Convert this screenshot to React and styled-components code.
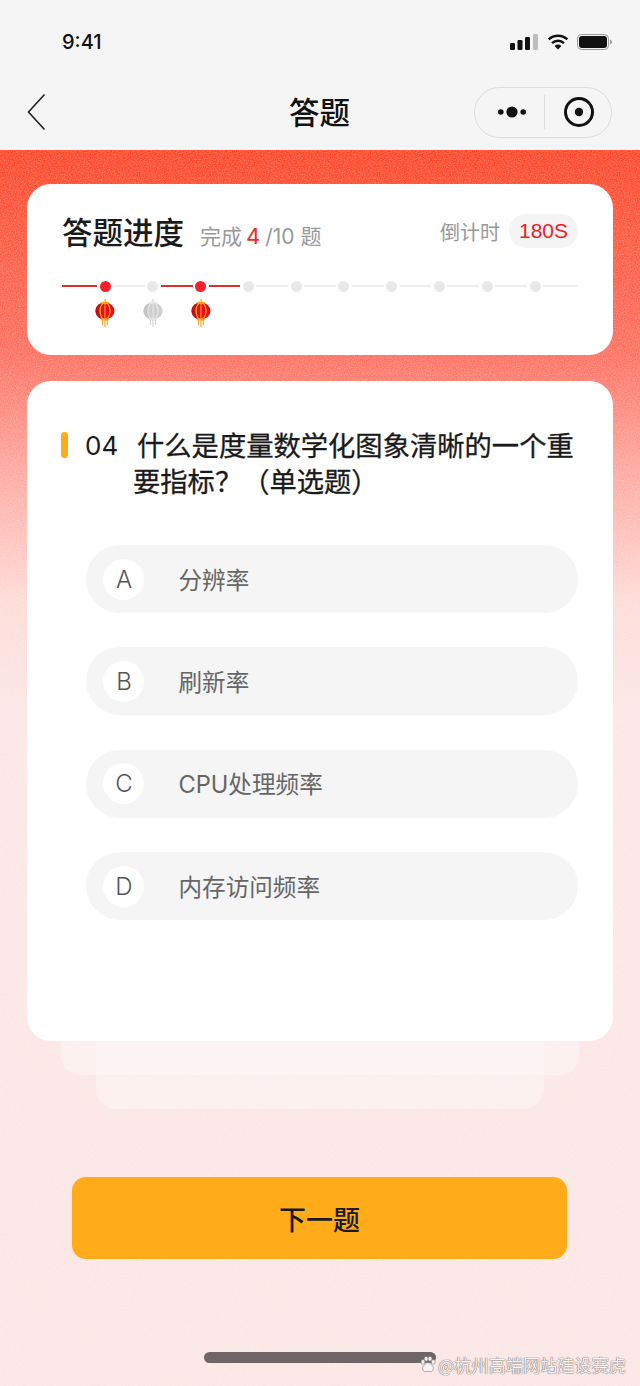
import React from 'react'
import styled, { createGlobalStyle } from 'styled-components'

const CJK = `"Noto Sans CJK SC", "Noto Sans", sans-serif`
const LATIN = `Inter, "Noto Sans CJK SC", sans-serif`

const noise = `url("data:image/svg+xml,%3Csvg xmlns='http://www.w3.org/2000/svg' width='240' height='240'%3E%3Cfilter id='n'%3E%3CfeTurbulence type='fractalNoise' baseFrequency='0.85' numOctaves='2' stitchTiles='stitch'/%3E%3CfeColorMatrix type='matrix' values='0 0 0 0 1 0 0 0 0 1 0 0 0 0 1 0.5 0 0 0 -0.16'/%3E%3C/filter%3E%3Crect width='240' height='240' filter='url(%23n)'/%3E%3C/svg%3E")`

const GlobalStyle = createGlobalStyle`
    * { box-sizing: border-box; }
    html, body { margin: 0; padding: 0; background: #fbe6e5; }
    body { font-family: ${CJK}; }
`

const Page = styled.div`
    position: relative;
    width: 640px;
    height: 1386px;
    overflow: hidden;
    display: flex;
    flex-direction: column;
`

const Header = styled.header`
    height: 150px;
    flex: none;
    background: #f5f5f5;
`

const StatusBar = styled.div`
    height: 84px;
    display: flex;
    align-items: center;
    justify-content: space-between;
    padding: 0 28px 0 62px;
`

const Time = styled.span`
    font-family: ${LATIN};
    font-size: 20px;
    font-weight: 500;
    color: #111;
`

const StatusIcons = styled.div`
    display: flex;
    align-items: center;
    gap: 8.5px;
`

const NavBar = styled.nav`
    height: 56px;
    display: grid;
    grid-template-columns: 1fr auto 1fr;
    align-items: center;
    padding: 0 28px 0 27px;
`

const NavTitle = styled.h1`
    margin: -3px 0 0;
    font-size: 30.5px;
    font-weight: 500;
    color: #111;
`

const Capsule = styled.div`
    justify-self: end;
    width: 138px;
    height: 51px;
    border-radius: 26px;
    border: 1px solid #dcdcdc;
    display: flex;
    align-items: center;
`

const CapsuleSlot = styled.div`
    flex: 1;
    display: flex;
    align-items: center;
    justify-content: center;
    padding-left: ${p => p.$shift}px;
`

const CapsuleLine = styled.div`
    width: 1px;
    height: 34px;
    background: #dedede;
`

const Main = styled.main`
    flex: 1;
    display: flex;
    flex-direction: column;
    padding: 34px 27px 0;
    background-color: #fbe6e5;
    background-image: ${noise}, linear-gradient(180deg, #ff4526 0, #ff5a42 100px, #ff6f5f 205px, #ffa299 310px, #fedad6 450px, #fbe6e5 560px);
`

const ProgressCard = styled.section`
    height: 171px;
    flex: none;
    padding: 25px 35px 0;
    background: #fff;
    border-radius: 24px;
`

const ProgressHead = styled.div`
    display: flex;
    align-items: center;
    justify-content: space-between;
    height: 44px;
`

const TitleGroup = styled.div`
    display: flex;
    align-items: baseline;
    gap: 16px;
`

const CardTitle = styled.h2`
    margin: 0;
    font-size: 30.5px;
    font-weight: 500;
    color: #1a1a1a;
`

const Done = styled.span`
    font-size: 21px;
    color: #999;
    font-family: ${LATIN};
    b {
        font-size: 22px;
        font-weight: 400;
        color: #ee2a2a;
        margin: 0 5px 0 4px;
    }
`

const Countdown = styled.div`
    display: flex;
    align-items: center;
    gap: 9px;
    font-size: 20px;
    color: #999;
`

const Seconds = styled.span`
    height: 34px;
    padding: 0 10px;
    border-radius: 17px;
    background: #f4f4f4;
    color: #ee1c25;
    font-family: "Liberation Sans", sans-serif;
    font-size: 21px;
    line-height: 34px;
`

const Track = styled.div`
    margin-top: 27px;
    height: 12px;
    display: flex;
    align-items: center;
    gap: 2.5px;
`

const Line = styled.span`
    flex: ${p => (p.$edge ? '0 0 35px' : '1')};
    height: 2px;
    background: ${p => (p.$on ? '#d9312f' : '#eeeeee')};
`

const Dot = styled.span`
    flex: none;
    width: 11px;
    height: 11px;
    border-radius: 50%;
    background: ${p => (p.$on ? '#f5222d' : '#e9e9e9')};
`

const Lanterns = styled.div`
    margin: 7px 0 0 33px;
    display: flex;
    gap: 28px;
`

const QuestionCard = styled.section`
    position: relative;
    z-index: 2;
    height: 660px;
    flex: none;
    margin-top: 26px;
    padding: 49px 35px 0;
    background: #fff;
    border-radius: 24px;
`

const Question = styled.div`
    display: flex;
    align-items: flex-start;
    color: #1a1a1a;
`

const Mark = styled.span`
    flex: none;
    width: 7px;
    height: 26px;
    margin: 2px 0 0 -1px;
    border-radius: 4px;
    background: #ffab1a;
`

const Num = styled.span`
    flex: none;
    width: 48px;
    margin-left: 17px;
    font-family: ${LATIN};
    font-size: 26px;
    font-weight: 400;
    line-height: 32px;
`

const QuestionText = styled.p`
    margin: -4px 0 0;
    width: 444px;
    font-size: 27.3px;
    font-weight: 400;
    line-height: 36px;
    text-indent: 4px;
    -webkit-text-stroke: 0.3px #1a1a1a;
`

const Options = styled.div`
    margin: 47px 0 0 24px;
    display: flex;
    flex-direction: column;
    gap: 34.4px;
`

const Option = styled.div`
    height: 68px;
    padding: 0 17px;
    display: flex;
    align-items: center;
    border-radius: 34px;
    background: #f5f5f5;
`

const Letter = styled.span`
    flex: none;
    width: 41px;
    height: 41px;
    padding-left: 1px;
    border-radius: 50%;
    background: #fff;
    display: flex;
    align-items: center;
    justify-content: center;
    font-family: ${LATIN};
    font-size: 24px;
    font-weight: 300;
    color: #555;
`

const OptionText = styled.span`
    margin: -1px 0 0 34.5px;
    font-family: ${LATIN};
    font-size: 23.6px;
    font-weight: 400;
    color: #666;
`

const BackLayer = styled.div`
    flex: none;
    margin: ${p => p.$top}px ${p => p.$side}px 0;
    height: ${p => p.$h}px;
    border-radius: 0 0 20px 20px;
    background: rgba(255, 255, 255, 0.35);
`

const NextButton = styled.button`
    flex: none;
    margin: 68px 46px 0 45px;
    height: 82px;
    border: none;
    border-radius: 14px;
    background: #ffab1a;
    font-family: ${CJK};
    font-size: 27px;
    font-weight: 500;
    color: #1a1a1a;
`

const HomeBar = styled.div`
    flex: none;
    align-self: flex-start;
    width: 232px;
    height: 11px;
    margin: 93px 0 0 177px;
    border-radius: 6px;
    background: #6f6466;
`

const Watermark = styled.div`
    position: absolute;
    left: 420px;
    top: 1353px;
    display: flex;
    align-items: center;
    gap: 2px;
    font-size: 17.2px;
    line-height: 24px;
    color: #fdf3f2;
    text-shadow: 0 0 1px #666, 0 0 1px #666;
`

const Back = () => (
    <svg width="20" height="38" viewBox="0 0 20 38" fill="none">
        <path d="M17.5 1.5 1.5 19l16 17.5" stroke="#222" strokeWidth="1.6" />
    </svg>
)

const Signal = () => (
    <svg width="28" height="16" viewBox="0 0 28 16" fill="#111">
        <rect x="0" y="9" width="5" height="7" rx="1.2" />
        <rect x="7.5" y="6" width="5" height="10" rx="1.2" />
        <rect x="15" y="3" width="5" height="13" rx="1.2" />
        <rect x="23" y="0" width="5" height="16" rx="1.2" fill="#bdbdbd" />
    </svg>
)

const Wifi = () => (
    <svg width="22" height="16" viewBox="0 0 23 17" fill="none" stroke="#111" strokeWidth="2.6">
        <path d="M1.500 5.800a14.400 14.400 0 0 1 20 0" />
        <path d="M5.200 9.600a9.200 9.200 0 0 1 12.600 0" />
        <path d="M11.500 16.500 7.900 12.700a5 5 0 0 1 7.200 0z" fill="#111" stroke="none" />
    </svg>
)

const Battery = () => (
    <svg width="35" height="16" viewBox="0 0 35 16" fill="none">
        <rect x="0.5" y="0.5" width="31" height="15" rx="4" stroke="#999" />
        <rect x="2" y="2" width="28" height="12" rx="3" fill="#111" />
        <path d="M33 5.500c1.200.4 2 1.400 2 2.500s-.8 2.100-2 2.500z" fill="#999" />
    </svg>
)

const More = () => (
    <svg width="28" height="12" viewBox="0 0 28 12" fill="#111">
        <circle cx="2.800" cy="6" r="2.800" />
        <circle cx="14" cy="6" r="5.600" />
        <circle cx="25.200" cy="6" r="2.800" />
    </svg>
)

const Target = () => (
    <svg width="30" height="30" viewBox="0 0 30 30" fill="none">
        <circle cx="15" cy="15" r="13.500" stroke="#111" strokeWidth="3" />
        <circle cx="15" cy="15" r="4.200" fill="#111" />
    </svg>
)

const Lantern = ({ off }) => {
    const body = off ? '#cfcfcf' : '#e5101c'
    const dark = off ? '#c4c4c4' : '#c50c12'
    const rib = off ? '#e6e6e6' : '#ffa81e'
    const tassel = off ? '#d6d6d6' : '#ffa81e'
    return (
        <svg width="20" height="28" viewBox="0 0 20 28" fill="none">
            <path d="M10 0v4" stroke={tassel} strokeWidth="1.200" />
            <ellipse cx="10" cy="12" rx="9.500" ry="8.500" fill={body} />
            <path d="M6 4.200C2.500 5.500.5 8.500.5 12s2 6.500 5.500 7.800z" fill={dark} />
            <ellipse cx="10" cy="12" rx="5" ry="8.500" stroke={rib} strokeWidth="1.300" />
            <path d="M10 3.500v17" stroke={rib} strokeWidth="1" />
            <rect x="6" y="2.800" width="8" height="2" rx="1" fill={rib} />
            <rect x="6" y="19.500" width="8" height="2" rx="1" fill={rib} />
            <path d="M7.500 21v5M10 21v7M12.500 21v5" stroke={tassel} strokeWidth="1.200" />
        </svg>
    )
}

const Paw = () => (
    <svg width="16" height="18" viewBox="0 0 16 18" fill="#fdf3f2" stroke="#777" strokeWidth="0.6">
        <ellipse cx="3" cy="6" rx="2" ry="2.400" />
        <ellipse cx="6.200" cy="2.800" rx="2" ry="2.400" />
        <ellipse cx="10" cy="2.800" rx="2" ry="2.400" />
        <ellipse cx="13.200" cy="6" rx="2" ry="2.400" />
        <path d="M8 6.500c2 0 2.800 2 4.300 3.200 2 1.600 1.200 6-1.800 6-1 0-1.600-.4-2.500-.4s-1.500.4-2.500.4c-3 0-3.800-4.400-1.800-6C5.200 8.500 6 6.500 8 6.500z" />
    </svg>
)

const options = [
    { key: 'A', text: '分辨率' },
    { key: 'B', text: '刷新率' },
    { key: 'C', text: 'CPU处理频率' },
    { key: 'D', text: '内存访问频率' },
]

const steps = [true, false, true, false, false, false, false, false, false, false]

const App = () => {
    return (
        <Page>
            <GlobalStyle />
            <Header>
                <StatusBar>
                    <Time>9:41</Time>
                    <StatusIcons>
                        <Signal />
                        <Wifi />
                        <Battery />
                    </StatusIcons>
                </StatusBar>
                <NavBar>
                    <Back />
                    <NavTitle>答题</NavTitle>
                    <Capsule>
                        <CapsuleSlot $shift={4}><More /></CapsuleSlot>
                        <CapsuleLine />
                        <CapsuleSlot $shift={1}><Target /></CapsuleSlot>
                    </Capsule>
                </NavBar>
            </Header>
            <Main>
                <ProgressCard>
                    <ProgressHead>
                        <TitleGroup>
                            <CardTitle>答题进度</CardTitle>
                            <Done>完成<b>4</b>/10 题</Done>
                        </TitleGroup>
                        <Countdown>
                            倒计时
                            <Seconds>180S</Seconds>
                        </Countdown>
                    </ProgressHead>
                    <Track>
                        <Line $edge $on />
                        {steps.map((on, i) => (
                            <React.Fragment key={i}>
                                <Dot $on={on} />
                                <Line
                                    $edge={i === steps.length - 1}
                                    $on={i === 2 || steps[i + 1]}
                                />
                            </React.Fragment>
                        ))}
                    </Track>
                    <Lanterns>
                        <Lantern />
                        <Lantern off />
                        <Lantern />
                    </Lanterns>
                </ProgressCard>
                <QuestionCard>
                    <Question>
                        <Mark />
                        <Num>04</Num>
                        <QuestionText>什么是度量数学化图象清晰的一个重要指标？（单选题）</QuestionText>
                    </Question>
                    <Options>
                        {options.map(o => (
                            <Option key={o.key}>
                                <Letter>{o.key}</Letter>
                                <OptionText>{o.text}</OptionText>
                            </Option>
                        ))}
                    </Options>
                </QuestionCard>
                <BackLayer $top={0} $side={34} $h={34} />
                <BackLayer $top={-34} $side={69} $h={68} />
                <NextButton>下一题</NextButton>
                <HomeBar />
            </Main>
            <Watermark>
                <Paw />
                @杭州高端网站建设赛虎
            </Watermark>
        </Page>
    )
}

export default App
